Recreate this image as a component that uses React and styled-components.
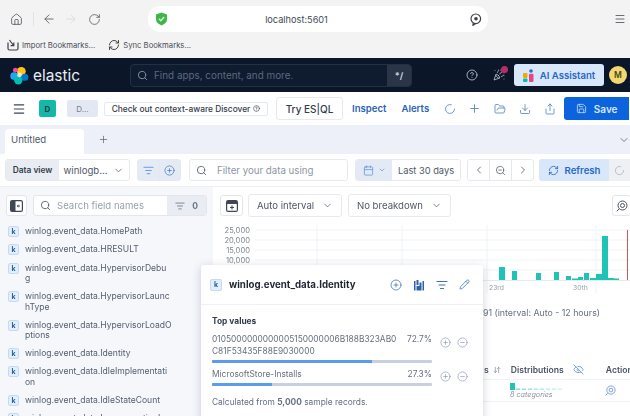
import React from "react";
import styled, { createGlobalStyle } from "styled-components";
import {
  House, ArrowLeft, ArrowRight, RotateCw, Menu, RefreshCw, Search, CircleHelp, PartyPopper,
  ListFilter, CirclePlus, CircleMinus, Calendar, ChevronDown, ChevronLeft, ChevronRight, ZoomOut,
  Pencil, EyeOff, Save, Share, Download, FolderOpen, Plus, ArrowDownUp, LoaderCircle,
} from "lucide-react";

const Global = createGlobalStyle`
  html, body { margin: 0; padding: 0; background: #fff; }
  * { box-sizing: border-box; }
  #root { width: 630px; height: 416px; overflow: hidden; }
`;
const Page = styled.div`
  position: relative; width: 630px; height: 416px; overflow: hidden;
  display: flex; flex-direction: column;
  font-family: Inter, "Noto Sans", sans-serif; color: #3a4556; filter: blur(0.45px);
`;
/* Browser chrome */
const Chrome = styled.div`
  height: 58px; flex: none; background: #f3f3f4; padding: 6px 0 0 0;
  display: flex; flex-direction: column; gap: 6px;
`;
const ChromeRow = styled.div`display: flex; align-items: center; height: 26px; padding-right: 3px;`;
const NavIcon = styled.span`
  display: flex; width: ${p => p.$w || 23}px; justify-content: center;
  color: ${p => p.$faint ? "#d9dbe0" : "#5a5e66"};
`;
const Sep = styled.span`width: 1px; height: 14px; background: #e3e3e5; margin: 0 4px 0 0;`;
const UrlPill = styled.div`
  margin-left: 42px; width: 340px; height: 26px; border-radius: 12px; background: #fff;
  display: flex; align-items: center; padding: 0 6px 0 7px;
`;
const UrlText = styled.span`flex: 1; text-align: center; font-size: 9.2px; color: #444b55; padding-right: 44px;`;
const Spacer = styled.span`flex: 1;`;
const Bookmarks = styled.div`display: flex; align-items: center; padding-left: 7px; height: 14px;`;
const Bookmark = styled.span`
  display: flex; align-items: center; gap: 3px; font-size: 7.7px; color: #4a4e56;
  margin-right: ${p => p.$mr || 0}px; white-space: nowrap;
`;
/* Elastic header */
const Header = styled.div`
  height: 34px; flex: none; background: #0b1628; display: flex; align-items: center; padding: 0 2px 0 10px;
`;
const Wordmark = styled.span`font-size: 15.4px; color: #e9edf3; margin-left: 4px; width: 97px;`;
const GlobalSearch = styled.div`
  width: 282px; height: 23px; border: 1px solid #232f43; border-radius: 4px; background: #0f1b2f;
  display: flex; align-items: center; padding-left: 6px; color: #8b98ab; overflow: hidden;
`;
const GlobalPlaceholder = styled.span`flex: 1; font-size: 9.9px; color: #5b6a82; margin-left: 6px;`;
const Shortcut = styled.span`
  width: 24px; height: 100%; background: #2a3548; color: #c5cedb; font-size: 9px; font-weight: 700;
  display: flex; align-items: center; justify-content: center;
`;
const HeaderIcon = styled.span`display: flex; position: relative; color: #c9d0dc; margin-left: ${p => p.$ml}px;`;
const Dot = styled.span`position: absolute; right: -3px; top: -3px; width: 7px; height: 7px; border-radius: 50%; background: #bd2a6a;`;
const AiButton = styled.div`
  margin-left: 9px; width: 90px; height: 22px; background: #d9e7fa; border-radius: 3px;
  display: flex; align-items: center; justify-content: center; gap: 6px; color: #2768c9; font-size: 9.6px; font-weight: 600; white-space: nowrap;
`;
const Avatar = styled.span`
  margin-left: 5px; width: 18px; height: 18px; border-radius: 50%; background: #f1d86f; color: #4d4526;
  display: flex; align-items: center; justify-content: center; font-size: 8.5px; font-weight: 600;
`;
/* App bar */
const AppBar = styled.div`
  height: 33px; flex: none; background: #fff; display: flex; align-items: center; padding-left: 12px;
`;
const Badge = styled.span`
  width: 17px; height: 17px; margin-left: 13px; border-radius: 2px; background: #14b8a6; color: #11433e;
  font-size: 8px; font-weight: 700; display: flex; align-items: center; justify-content: center;
`;
const PillD = styled.span`
  width: 31px; height: 17px; margin-left: 11px; border-radius: 2px; background: #e4e8f2; color: #77808f;
  font-size: 8px; display: flex; align-items: center; justify-content: center;
`;
const TourBtn = styled.span`
  width: 164px; height: 14px; margin-left: 6px; border: 1px solid #e6e9ef; border-radius: 2px;
  display: flex; align-items: center; justify-content: center; gap: 3px; font-size: 8.4px; font-weight: 500; color: #343c49; white-space: nowrap;
`;
const EsqlBtn = styled.span`
  width: 67px; height: 23px; margin-left: 8px; border: 1px solid #e6e9ef; border-radius: 3px;
  display: flex; align-items: center; justify-content: center; font-size: 10px; font-weight: 500; color: #343c49;
`;
const LinkBtn = styled.span`font-size: 9.6px; font-weight: 600; color: #2a62b8; margin-left: ${p => p.$ml}px;`;
const BarIcon = styled.span`display: flex; justify-content: center; width: 25px; color: #4f7ec4; margin-left: ${p => p.$ml || 0}px;`;
const SaveBtn = styled.span`
  width: 65px; height: 23px; margin-left: 2px; background: #0b64dd; border-radius: 3px 0 0 3px; color: #dbe8fa;
  display: flex; align-items: center; justify-content: center; gap: 7px; font-size: 10px; font-weight: 600;
`;
/* Tabs */
const TabBar = styled.div`
  height: 29px; flex: none; background: #edf0f8; display: flex; align-items: flex-end; padding-left: 5px;
`;
const Tab = styled.span`
  width: 79px; height: 25px; background: #fff; border-radius: 4px 4px 0 0; font-size: 9.6px; color: #4e5866;
  display: flex; align-items: center; padding: 0 0 5px 6px;
`;
const TabIcon = styled.span`display: flex; color: #5a6472; align-self: center; margin-left: ${p => p.$ml}px;`;
/* Filter bar */
const FilterBar = styled.div`
  height: 33px; flex: none; background: #fff; border-bottom: 1px solid #eef0f4;
  display: flex; align-items: center; padding-left: 5px; overflow: hidden;
`;
const Group = styled.div`
  height: 22px; flex: none; width: ${p => p.$w}px; margin-left: ${p => p.$ml || 0}px; display: flex; align-items: stretch;
  border: 1px solid #e6e9ef; border-radius: 3px; background: ${p => p.$bg || "#fff"}; overflow: hidden;
`;
const Cell = styled.span`
  width: ${p => p.$w ? p.$w + "px" : "auto"}; flex: ${p => p.$w ? "none" : 1};
  display: flex; align-items: center; justify-content: center; gap: ${p => p.$gap || 0}px; white-space: nowrap;
  background: ${p => p.$bg || "transparent"}; color: ${p => p.$c || "#4e5866"};
  font-size: ${p => p.$fs || 9.6}px; font-weight: ${p => p.$fw || 400};
  border-right: ${p => p.$line ? "1px solid #e4e7ed" : "0"};
`;
const FilterSearch = styled.span`display: flex; align-items: center; padding-left: 6px; gap: 10px; font-size: 9.7px; color: #8d96a5;`;
const RefreshBtn = styled.span`
  width: 70px; height: 22px; flex: none; margin-left: 5px; background: #d9e7fa; color: #2768c9; border-radius: 3px 0 0 3px;
  display: flex; align-items: center; justify-content: center; gap: 6px; font-size: 9.6px; font-weight: 600;
`;
const RefreshSide = styled.span`
  width: 21px; height: 22px; flex: none; background: #eef0f4; color: #b4bac4; display: flex; align-items: center; justify-content: center;
`;
/* Main */
const Main = styled.div`flex: 1; min-height: 0; display: grid; grid-template-columns: 213px 1fr;`;
const Sidebar = styled.aside`background: #f5f7fb; padding: 8px 0 0 6px; overflow: hidden;`;
const SideTop = styled.div`display: flex; align-items: center; height: 21px; margin-bottom: 7px;`;
const SquareBtn = styled.span`
  width: ${p => p.$w || 21}px; height: 21px; flex: none; border: 1px solid #e3e6ec; border-radius: 3px; background: #fff;
  display: flex; align-items: center; justify-content: center; color: #4a5361; margin-left: ${p => p.$ml || 0}px;
`;
const FieldSearch = styled.div`
  margin-left: 6px; width: 174px; height: 21px; border: 1px solid #e3e6ec; border-radius: 3px; background: #fff;
  display: flex; align-items: stretch; overflow: hidden;
`;
const FieldInput = styled.span`flex: 1; display: flex; align-items: center; gap: 6px; padding-left: 6px; font-size: 9.6px; color: #98a1af;`;
const FieldFilter = styled.span`
  width: 39px; background: #e9ecf2; display: flex; align-items: center; justify-content: center; gap: 7px;
  font-size: 8.5px; font-weight: 700; color: #6b7482;
`;
const FieldList = styled.div`display: flex; flex-direction: column; padding-left: 2px;`;
const FieldRow = styled.div`display: flex; gap: 6px; padding: 3px 0 4.3px 0; align-items: flex-start;`;
const Token = styled.span`
  width: ${p => p.$s || 11}px; height: ${p => p.$s || 11}px; flex: none; border-radius: 2px; background: #e1eefb; border: 1px solid #c4daf3;
  color: #2b5fa8; font-size: 7px; font-weight: 700; display: flex; align-items: center; justify-content: center;
`;
const FieldName = styled.span`
  width: 160px; font-size: 8.55px; line-height: 10.6px; color: #55606f; white-space: pre-line;
`;
/* Chart panel */
const Panel = styled.section`background: #fff; padding: 8px 0 0 7px; overflow: hidden; display: flex; flex-direction: column;`;
const PanelTop = styled.div`display: flex; align-items: center; height: 21px;`;
const Select = styled.span`
  height: 23px; width: ${p => p.$w}px; margin-left: ${p => p.$ml}px; flex: none; border: 1px solid #e6e9ef; border-radius: 3px;
  display: flex; align-items: center; justify-content: center; gap: 8px; font-size: 9.6px; color: #4e5866;
`;
const ChartArea = styled.div`margin: 6px 0 0 -7px; height: 71px;`;
const Status = styled.div`padding-left: 263px; margin-top: 13px; font-size: 8.8px; color: #66707e; height: 14px; line-height: 14px; white-space: nowrap;`;
const TableHead = styled.div`
  margin-top: 40px; height: 20px; padding-left: 264px; display: flex; align-items: center; border-bottom: 1px solid #eff1f4;
  font-size: 8.6px; font-weight: 600; color: #4a5361; white-space: nowrap;
`;
const HeadCell = styled.span`display: flex; align-items: center; gap: ${p => p.$gap || 0}px; margin-left: ${p => p.$ml || 0}px; color: inherit;`;
const HeadIcon = styled.span`display: flex; color: #6f9be0;`;
const TableRow = styled.div`
  height: 22px; padding: 3px 0 0 290px; display: flex; align-items: flex-start; border-bottom: 1px solid #eff1f4;
`;
const DistCol = styled.div`width: 95px; display: flex; flex-direction: column;`;
const Cats = styled.span`font-size: 7.2px; font-style: italic; color: #8b94a1; line-height: 8px; margin-top: 0;`;
const RowAction = styled.span`display: flex; color: #6f9be0; margin-top: 2px;`;
/* Popover */
const Popover = styled.div`
  position: absolute; left: 201px; top: 265px; width: 282px; height: 160px; background: #fff;
  box-shadow: 0 2px 10px rgba(40, 55, 80, .22); border-radius: 3px;
`;
const PopHead = styled.div`
  height: 40px; border-bottom: 1px solid #eef0f4; display: flex; align-items: center; padding-left: 9px;
`;
const PopTitle = styled.span`font-size: 9.7px; font-weight: 700; color: #1f2733; margin-left: 7px; width: 155px; white-space: nowrap;`;
const PopIcon = styled.span`display: flex; width: 23px; justify-content: center; color: #3e6fb8;`;
const PopBody = styled.div`padding: 11px 11px 0 11px;`;
const TopTitle = styled.div`font-size: 8.4px; font-weight: 700; color: #343c49; line-height: 11px; margin-bottom: 6px;`;
const ValueRow = styled.div`display: grid; grid-template-columns: 220px 1fr; column-gap: 8px; margin-bottom: ${p => p.$mb}px;`;
const ValueMain = styled.div`display: flex; flex-direction: column;`;
const ValueText = styled.div`display: flex; justify-content: space-between; font-size: 8.4px; line-height: 12px; color: #66707e;`;
const ValueName = styled.span`width: 188px; word-break: break-all;`;
const Track = styled.div`height: 3px; margin-top: 3px; background: #c8d0de; border-radius: 1px; overflow: hidden;`;
const Fill = styled.div`height: 100%; background: #5c9bf0;`;
const ValueActions = styled.div`display: flex; gap: 6px; padding-top: ${p => p.$pt}px; color: #7d8eac;`;
const Foot = styled.div`font-size: 8.4px; color: #66707e; margin-top: 11px;`;

const ElasticLogo = () => (
  <svg width="19" height="19" viewBox="0 0 32 32">
    <circle cx="19" cy="9" r="7.5" fill="#fec514" />
    <circle cx="9" cy="7" r="4" fill="#f04e98" />
    <circle cx="7" cy="17" r="6.5" fill="#1ba9f5" />
    <circle cx="25" cy="19" r="6" fill="#0077cc" />
    <circle cx="14" cy="24" r="7" fill="#00bfb3" />
    <circle cx="16" cy="15" r="4" fill="#e9edf3" opacity=".9" />
  </svg>
);
const Shield = () => (
  <svg width="13" height="14" viewBox="0 0 14 15">
    <path d="M7 .6 13 2.6v5c0 3.4-2.6 5.7-6 6.8C3.6 13.3 1 11 1 7.600v-5z" fill="#3fb54b" />
    <path d="M4.2 7.3 6.2 9.3 9.9 5.4" fill="none" stroke="#d9f4dc" strokeWidth="1.5" />
  </svg>
);
const ChatDot = () => (
  <svg width="13" height="13" viewBox="0 0 13 13" fill="none" stroke="#3d4046" strokeWidth="1.2">
    <circle cx="6.8" cy="5.8" r="4.8" />
    <path d="M4.2 10 4 12.4 6.6 10.6" />
    <circle cx="7" cy="5.8" r="1.8" fill="#3d4046" stroke="none" />
  </svg>
);
const ImportTray = () => (
  <svg width="12" height="12" viewBox="0 0 12 12" fill="none" stroke="#3d4046" strokeWidth="1.2">
    <path d="M1 3.5v6A1.5 1.5 0 0 0 2.500 11h7A1.500 1.500 0 0 0 11 9.500v-6" />
    <path d="M2.500 1 6.500 6.500M6.800 3.500v3.200H3.600" />
  </svg>
);
const AiMark = () => (
  <svg width="11" height="13" viewBox="0 0 11 13">
    <circle cx="8" cy="2" r="1.8" fill="#1d6fdc" />
    <rect x="0" y="4" width="4.5" height="5" rx="1" fill="#f5a700" />
    <rect x="0" y="9.5" width="4.5" height="3.5" rx="1" fill="#00bfb3" />
    <rect x="6" y="4.8" width="4.5" height="8.2" rx="1" fill="#e5487f" />
  </svg>
);
const PanelToggle = () => (
  <svg width="13" height="12" viewBox="0 0 13 12">
    <rect x=".6" y=".6" width="11.8" height="10.8" rx="1.5" fill="none" stroke="#3f4754" strokeWidth="1.2" />
    <rect x="1" y="1" width="4.5" height="10" fill="#3f4754" />
    <path d="M10 6H7.500M8.500 4.700 7.300 6l1.200 1.300" fill="none" stroke="#3f4754" strokeWidth="1" />
  </svg>
);
const CalendarBox = () => (
  <svg width="12" height="12" viewBox="0 0 12 12">
    <rect x=".6" y=".6" width="10.8" height="10.8" rx="1.5" fill="none" stroke="#3f4754" strokeWidth="1.2" />
    <rect x="1" y="1" width="10" height="3" fill="#3f4754" />
    <path d="M6 5.500v4M4 7.500h4" stroke="#3f4754" strokeWidth="1.1" />
  </svg>
);
const VisIcon = () => (
  <svg width="12" height="12" viewBox="0 0 12 12" fill="#2f62ad">
    <rect x="1" y="2" width="1.5" height="9.5" />
    <rect x="9.5" y="2" width="1.5" height="9.5" />
    <rect x="3.5" y="1" width="2" height="5" />
    <rect x="6.5" y="3.5" width="2" height="4" />
    <rect x="3.5" y="7" width="5" height="4.5" />
  </svg>
);
const InspectRing = ({ color, size }) => (
  <svg width={size} height={size} viewBox="0 0 12 12" fill="none" stroke={color} strokeWidth="1">
    <circle cx="6.5" cy="5.5" r="4.5" />
    <circle cx="6.5" cy="5.5" r="2" />
    <path d="M3 9 .8 11.200" />
  </svg>
);
const BAR_COLOR = "#1fc4b6";
const bars = [
  [499, 267, 6], [512, 271, 5], [536, 273, 5], [554, 272, 5], [566, 276, 5], [572, 278.5, 6], [578, 277, 5],
  [584, 273, 5], [590, 278, 6], [596, 274, 6], [602, 236, 6], [608, 278, 6], [614, 278.5, 5],
];
const Chart = () => (
  <svg width="417" height="71" viewBox="213 222 417 71" style={{ display: "block" }}>
    {[230, 240, 250, 260, 270].map(y => <line key={y} x1="255" x2="630" y1={y} y2={y} stroke="#f0f2f5" />)}
    {[317, 402, 487, 596].map(x => <line key={x} x1={x} x2={x} y1="225" y2="293" stroke="#f0f2f5" />)}
    <line x1="255" x2="630" y1="280.5" y2="280.5" stroke="#e6e9ee" />
    {["25,000", "20,000", "15,000", "10,000"].map((t, i) => (
      <text key={t} x="250" y={233 + i * 10} textAnchor="end" fontSize="7.6" fill="#7d8693" fontFamily="Inter">{t}</text>
    ))}
    {bars.map(([x, y, w]) => <rect key={x} x={x} y={y} width={w} height={280 - y} fill={BAR_COLOR} />)}
    <line x1="627.5" x2="627.5" y1="230" y2="280" stroke="#c85a5f" />
    <text x="489" y="290" fontSize="6.8" fill="#98a1ad" fontFamily="Inter">23rd</text>
    <text x="573" y="290" fontSize="6.8" fill="#98a1ad" fontFamily="Inter">30th</text>
  </svg>
);
const MiniDist = () => (
  <svg width="60" height="8" viewBox="0 0 60 8" style={{ display: "block" }}>
    <rect x="0" y="0" width="5" height="7" fill={BAR_COLOR} />
    {[6, 12, 18, 24, 30, 36, 42, 48].map((x, i) => (
      <rect key={x} x={x} y="5.5" width="4" height="1.5" fill={BAR_COLOR} opacity={0.55 - i * 0.05} />
    ))}
  </svg>
);
const fields = [
  "winlog.event_data.HomePath", "winlog.event_data.HRESULT", "winlog.event_data.HypervisorDebu\ng",
  "winlog.event_data.HypervisorLaunc\nhType", "winlog.event_data.HypervisorLoadO\nptions",
  "winlog.event_data.Identity", "winlog.event_data.IdleImplementati\non", "winlog.event_data.IdleStateCount",
  "winlog.event_data.ImpersonationL",
];

export default function App() {
  return (
    <Page>
      <Global />
      <Chrome>
        <ChromeRow>
          <NavIcon $w={33}><House size={13} strokeWidth={1.6} /></NavIcon>
          <Sep />
          <NavIcon $w={21}><ArrowLeft size={14} strokeWidth={1.5} /></NavIcon>
          <NavIcon $faint><ArrowRight size={14} strokeWidth={1.5} /></NavIcon>
          <NavIcon $w={24}><RotateCw size={13} strokeWidth={1.5} /></NavIcon>
          <UrlPill>
            <Shield />
            <UrlText>localhost:5601</UrlText>
            <ChatDot />
          </UrlPill>
          <Spacer />
          <NavIcon $w={14}><Menu size={12} strokeWidth={1.8} /></NavIcon>
        </ChromeRow>
        <Bookmarks>
          <Bookmark $mr={13}><ImportTray />Import Bookmarks...</Bookmark>
          <Bookmark><RefreshCw size={12} strokeWidth={1.8} color="#333" />Sync Bookmarks...</Bookmark>
        </Bookmarks>
      </Chrome>
      <Header>
        <ElasticLogo />
        <Wordmark>elastic</Wordmark>
        <GlobalSearch>
          <Search size={11} strokeWidth={2} />
          <GlobalPlaceholder>Find apps, content, and more.</GlobalPlaceholder>
          <Shortcut>*/</Shortcut>
        </GlobalSearch>
        <HeaderIcon $ml={54}><CircleHelp size={12} strokeWidth={1.6} /></HeaderIcon>
        <HeaderIcon $ml={15}><PartyPopper size={12} strokeWidth={1.5} /><Dot /></HeaderIcon>
        <AiButton><AiMark />AI Assistant</AiButton>
        <Avatar>M</Avatar>
      </Header>
      <AppBar>
        <Menu size={14} strokeWidth={2} color="#3a4556" />
        <Badge>D</Badge>
        <PillD>D...</PillD>
        <TourBtn>Check out context-aware Discover <CircleHelp size={7} /></TourBtn>
        <EsqlBtn>Try ES|QL</EsqlBtn>
        <LinkBtn $ml={9}>Inspect</LinkBtn>
        <LinkBtn $ml={15}>Alerts</LinkBtn>
        <BarIcon $ml={8}><LoaderCircle size={12} strokeWidth={1.6} /></BarIcon>
        <BarIcon><Plus size={13} strokeWidth={1.6} /></BarIcon>
        <BarIcon><FolderOpen size={12} strokeWidth={1.6} /></BarIcon>
        <BarIcon><Download size={12} strokeWidth={1.6} /></BarIcon>
        <BarIcon><Share size={12} strokeWidth={1.6} /></BarIcon>
        <SaveBtn><Save size={11} strokeWidth={1.6} />Save</SaveBtn>
      </AppBar>
      <TabBar>
        <Tab>Untitled</Tab>
        <TabIcon $ml={14}><Plus size={11} strokeWidth={1.6} /></TabIcon>
        <Spacer />
        <TabIcon $ml={0}><ChevronDown size={12} strokeWidth={1.6} /></TabIcon>
      </TabBar>
      <FilterBar>
        <Group $w={125}>
          <Cell $w={53} $bg="#e9edf3" $fs={8.4} $fw={600} $c="#343c49">Data view</Cell>
          <Cell $gap={6}>winlogb... <ChevronDown size={11} strokeWidth={1.6} /></Cell>
        </Group>
        <Group $w={44} $ml={7} $bg="#e5ebf5">
          <Cell $line $c="#5c93e6"><ListFilter size={11} strokeWidth={2} /></Cell>
          <Cell $c="#3d78d4"><CirclePlus size={11} strokeWidth={1.6} /></Cell>
        </Group>
        <Group $w={159} $ml={8}>
          <FilterSearch><Search size={11} strokeWidth={2} color="#5b6472" />Filter your data using</FilterSearch>
        </Group>
        <Group $w={106} $ml={7}>
          <Cell $w={36} $bg="#e3e9f5" $gap={4} $c="#5c93e6"><Calendar size={11} strokeWidth={1.6} /><ChevronDown size={8} /></Cell>
          <Cell $fs={9.3}>Last 30 days</Cell>
        </Group>
        <Group $w={67} $ml={6}>
          <Cell $line><ChevronLeft size={12} strokeWidth={1.6} /></Cell>
          <Cell $line><ZoomOut size={11} strokeWidth={1.6} /></Cell>
          <Cell><ChevronRight size={12} strokeWidth={1.6} /></Cell>
        </Group>
        <RefreshBtn><RefreshCw size={11} strokeWidth={1.8} />Refresh</RefreshBtn>
        <RefreshSide><LoaderCircle size={11} /></RefreshSide>
      </FilterBar>
      <Main>
        <Sidebar>
          <SideTop>
            <SquareBtn><PanelToggle /></SquareBtn>
            <FieldSearch>
              <FieldInput><Search size={11} strokeWidth={2} color="#5b6472" />Search field names</FieldInput>
              <FieldFilter><ListFilter size={10} strokeWidth={2} />0</FieldFilter>
            </FieldSearch>
          </SideTop>
          <FieldList>
            {fields.map(f => (
              <FieldRow key={f}>
                <Token>k</Token>
                <FieldName>{f}</FieldName>
              </FieldRow>
            ))}
          </FieldList>
        </Sidebar>
        <Panel>
          <PanelTop>
            <SquareBtn $w={23}><CalendarBox /></SquareBtn>
            <Select $w={94} $ml={5}>Auto interval <ChevronDown size={11} strokeWidth={1.6} /></Select>
            <Select $w={103} $ml={6}>No breakdown <ChevronDown size={11} strokeWidth={1.6} /></Select>
            <SquareBtn $w={19} $ml={161}><InspectRing color="#4a5361" size={12} /></SquareBtn>
          </PanelTop>
          <ChartArea><Chart /></ChartArea>
          <Status>91 (interval: Auto - 12 hours)</Status>
          <TableHead>
            <HeadCell $gap={4}>s <ArrowDownUp size={8} color="#7d8693" /></HeadCell>
            <HeadCell $ml={10} $gap={9}>Distributions <HeadIcon><EyeOff size={11} /></HeadIcon></HeadCell>
            <HeadCell $ml={22}>Actions</HeadCell>
          </TableHead>
          <TableRow>
            <DistCol>
              <MiniDist />
              <Cats>8 categories</Cats>
            </DistCol>
            <RowAction><InspectRing color="#6f9be0" size={11} /></RowAction>
          </TableRow>
        </Panel>
      </Main>
      <Popover>
        <PopHead>
          <Token $s={12}>k</Token>
          <PopTitle>winlog.event_data.Identity</PopTitle>
          <PopIcon><CirclePlus size={12} strokeWidth={1.5} /></PopIcon>
          <PopIcon><VisIcon /></PopIcon>
          <PopIcon><ListFilter size={12} strokeWidth={2} /></PopIcon>
          <PopIcon><Pencil size={11} strokeWidth={1.6} /></PopIcon>
        </PopHead>
        <PopBody>
          <TopTitle>Top values</TopTitle>
          <ValueRow $mb={5}>
            <ValueMain>
              <ValueText>
                <ValueName>0105000000000005150000006B188B323AB0C81F53435F88E9030000</ValueName>
                <span>72.7%</span>
              </ValueText>
              <Track><Fill style={{ width: "72.7%" }} /></Track>
            </ValueMain>
            <ValueActions $pt={4}><CirclePlus size={11} strokeWidth={1.3} /><CircleMinus size={11} strokeWidth={1.3} /></ValueActions>
          </ValueRow>
          <ValueRow $mb={0}>
            <ValueMain>
              <ValueText>
                <ValueName>MicrosoftStore-Installs</ValueName>
                <span>27.3%</span>
              </ValueText>
              <Track><Fill style={{ width: "27.3%" }} /></Track>
            </ValueMain>
            <ValueActions $pt={3}><CirclePlus size={11} strokeWidth={1.3} /><CircleMinus size={11} strokeWidth={1.3} /></ValueActions>
          </ValueRow>
          <Foot>Calculated from <b>5,000</b> sample records.</Foot>
        </PopBody>
      </Popover>
    </Page>
  );
}
